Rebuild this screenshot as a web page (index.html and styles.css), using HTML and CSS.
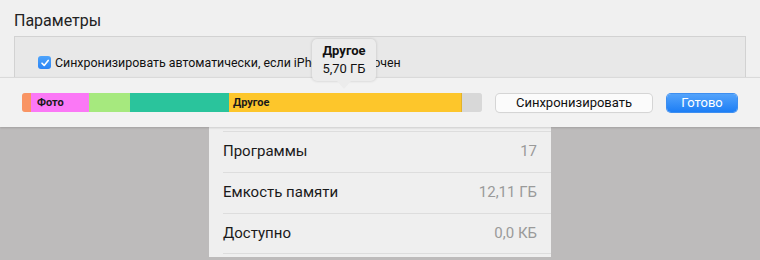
FILE: index.html
```html
<!DOCTYPE html>
<html lang="ru">
<head>
    <meta charset="UTF-8">
    <title>Параметры</title>
    <link rel="stylesheet" href="styles.css">
</head>
<body>
    <div class="top">
        <h2 class="title">Параметры</h2>
        <div class="options">
            <label class="check-row">
                <span class="checkbox">
                    <svg width="10" height="10" viewBox="0 0 10 10"><path d="M2 5.2 L4.2 7.4 L8.2 2.4" fill="none" stroke="#fff" stroke-width="1.6" stroke-linecap="round" stroke-linejoin="round"/></svg>
                </span>
                Синхронизировать автоматически, если iPhone подключен
            </label>
        </div>
    </div>

    <div class="toolbar">
        <div class="storage-bar">
            <div class="seg seg-orange" style="width: 9px"></div>
            <div class="seg seg-pink" style="width: 58px">Фото</div>
            <div class="seg seg-green" style="width: 41px"></div>
            <div class="seg seg-teal" style="width: 99px"></div>
            <div class="seg seg-yellow" style="width: 232px">Другое</div>
            <div class="seg seg-free" style="width: 21px"></div>
        </div>
        <button class="btn">Синхронизировать</button>
        <button class="btn btn-primary">Готово</button>

        <div class="tooltip">
            <b>Другое</b>
            <span>5,70 ГБ</span>
        </div>
    </div>

    <div class="lower">
        <div class="info-panel">
            <div class="info-row">
                <span>Программы</span>
                <span class="value">17</span>
            </div>
            <div class="info-row">
                <span>Емкость памяти</span>
                <span class="value">12,11 ГБ</span>
            </div>
            <div class="info-row">
                <span>Доступно</span>
                <span class="value">0,0 КБ</span>
            </div>
        </div>
    </div>
</body>
</html>
```

FILE: styles.css
```css
body {
    margin: 0;
    padding: 0;
    width: 760px;
    height: 260px;
    overflow: hidden;
    background-color: #bdbbbb;
    font-family: Roboto, "Liberation Sans", Arial, sans-serif;
    color: #1a1a1a;
}

.top {
    height: 77px;
    overflow: hidden;
    background-color: #f0f0f0;
    padding: 0 14px;
}

.title {
    margin: 0;
    padding-top: 11px;
    height: 25px;
    font-size: 16px;
    font-weight: normal;
    color: #222;
}

.options {
    background-color: #e8e8e8;
    border: 1px solid #d2d2d2;
    height: 60px;
    padding: 18px 0 0 23px;
}

.check-row {
    display: flex;
    align-items: center;
    gap: 4px;
    font-size: 12.4px;
    color: #111;
}

.checkbox {
    width: 13px;
    height: 13px;
    border-radius: 3px;
    background: linear-gradient(#4ea4fb, #2a84f5);
    display: flex;
    align-items: center;
    justify-content: center;
}

.toolbar {
    position: relative;
    z-index: 2;
    height: 50px;
    border-top: 1px solid #dadada;
    background-color: #f2f2f2;
    box-shadow: 0 1px 2px rgba(0, 0, 0, 0.15);
    display: flex;
    align-items: flex-start;
    padding: 15px 0 0 22px;
    box-sizing: border-box;
}

.storage-bar {
    display: flex;
    height: 19px;
    border-radius: 3px;
    overflow: hidden;
    box-shadow: inset 0 0 0 1px rgba(0, 0, 0, 0.06);
}

.seg {
    height: 100%;
    font-size: 11px;
    font-weight: bold;
    line-height: 19px;
    padding-left: 5px;
    box-sizing: border-box;
    color: #1a1a1a;
}

.seg-orange { background-color: #f99463; }
.seg-pink { background-color: #fb78f6; padding-left: 6px; }
.seg-green { background-color: #a6e97e; }
.seg-teal { background-color: #2ac49c; }
.seg-yellow { background-color: #fdc62b; padding-left: 4px; }
.seg-free { background-color: #d8d8d8; border-left: 1px solid #e3b32a; }

.btn {
    height: 18px;
    margin-top: 1px;
    padding: 0;
    border: none;
    border-radius: 4px;
    font-family: inherit;
    font-size: 13px;
    line-height: 18px;
}

.btn:first-of-type {
    width: 156px;
    margin-left: 14px;
    background-color: #fbfbfb;
    color: #111;
    box-shadow: 0 0 0 1px #d5d5d5, 0 1px 1px rgba(0, 0, 0, 0.08);
}

.btn-primary {
    width: 70px;
    margin-left: 15px;
    background: linear-gradient(#53a3fb, #1d7ef5);
    color: #fff;
    box-shadow: 0 0 0 1px #3d8ef0;
}

.tooltip {
    position: absolute;
    left: 312px;
    top: -39px;
    width: 64px;
    height: 42px;
    background-color: #ececec;
    border-radius: 5px;
    box-shadow: 0 0 3px rgba(0, 0, 0, 0.18);
    display: flex;
    flex-direction: column;
    align-items: center;
    justify-content: center;
    font-size: 13px;
    line-height: 18px;
    color: #111;
}

.tooltip::after {
    content: "";
    position: absolute;
    left: 25px;
    bottom: -8px;
    border-left: 7px solid transparent;
    border-right: 7px solid transparent;
    border-top: 8px solid #ececec;
}

.tooltip b {
    font-weight: bold;
}

.lower {
    padding-left: 209px;
}

.info-panel {
    width: 342px;
    height: 130px;
    background-color: #efefef;
    padding: 4px 0 0 14px;
    box-sizing: border-box;
}

.info-row {
    display: flex;
    justify-content: space-between;
    align-items: center;
    height: 41px;
    padding: 0 14px 2px 0;
    box-sizing: border-box;
    border-top: 1px solid #dddddd;
    font-size: 15px;
    color: #1a1a1a;
}

.info-row:last-child {
    border-bottom: 1px solid #dddddd;
}

.value {
    color: #9a9a9a;
}
```
